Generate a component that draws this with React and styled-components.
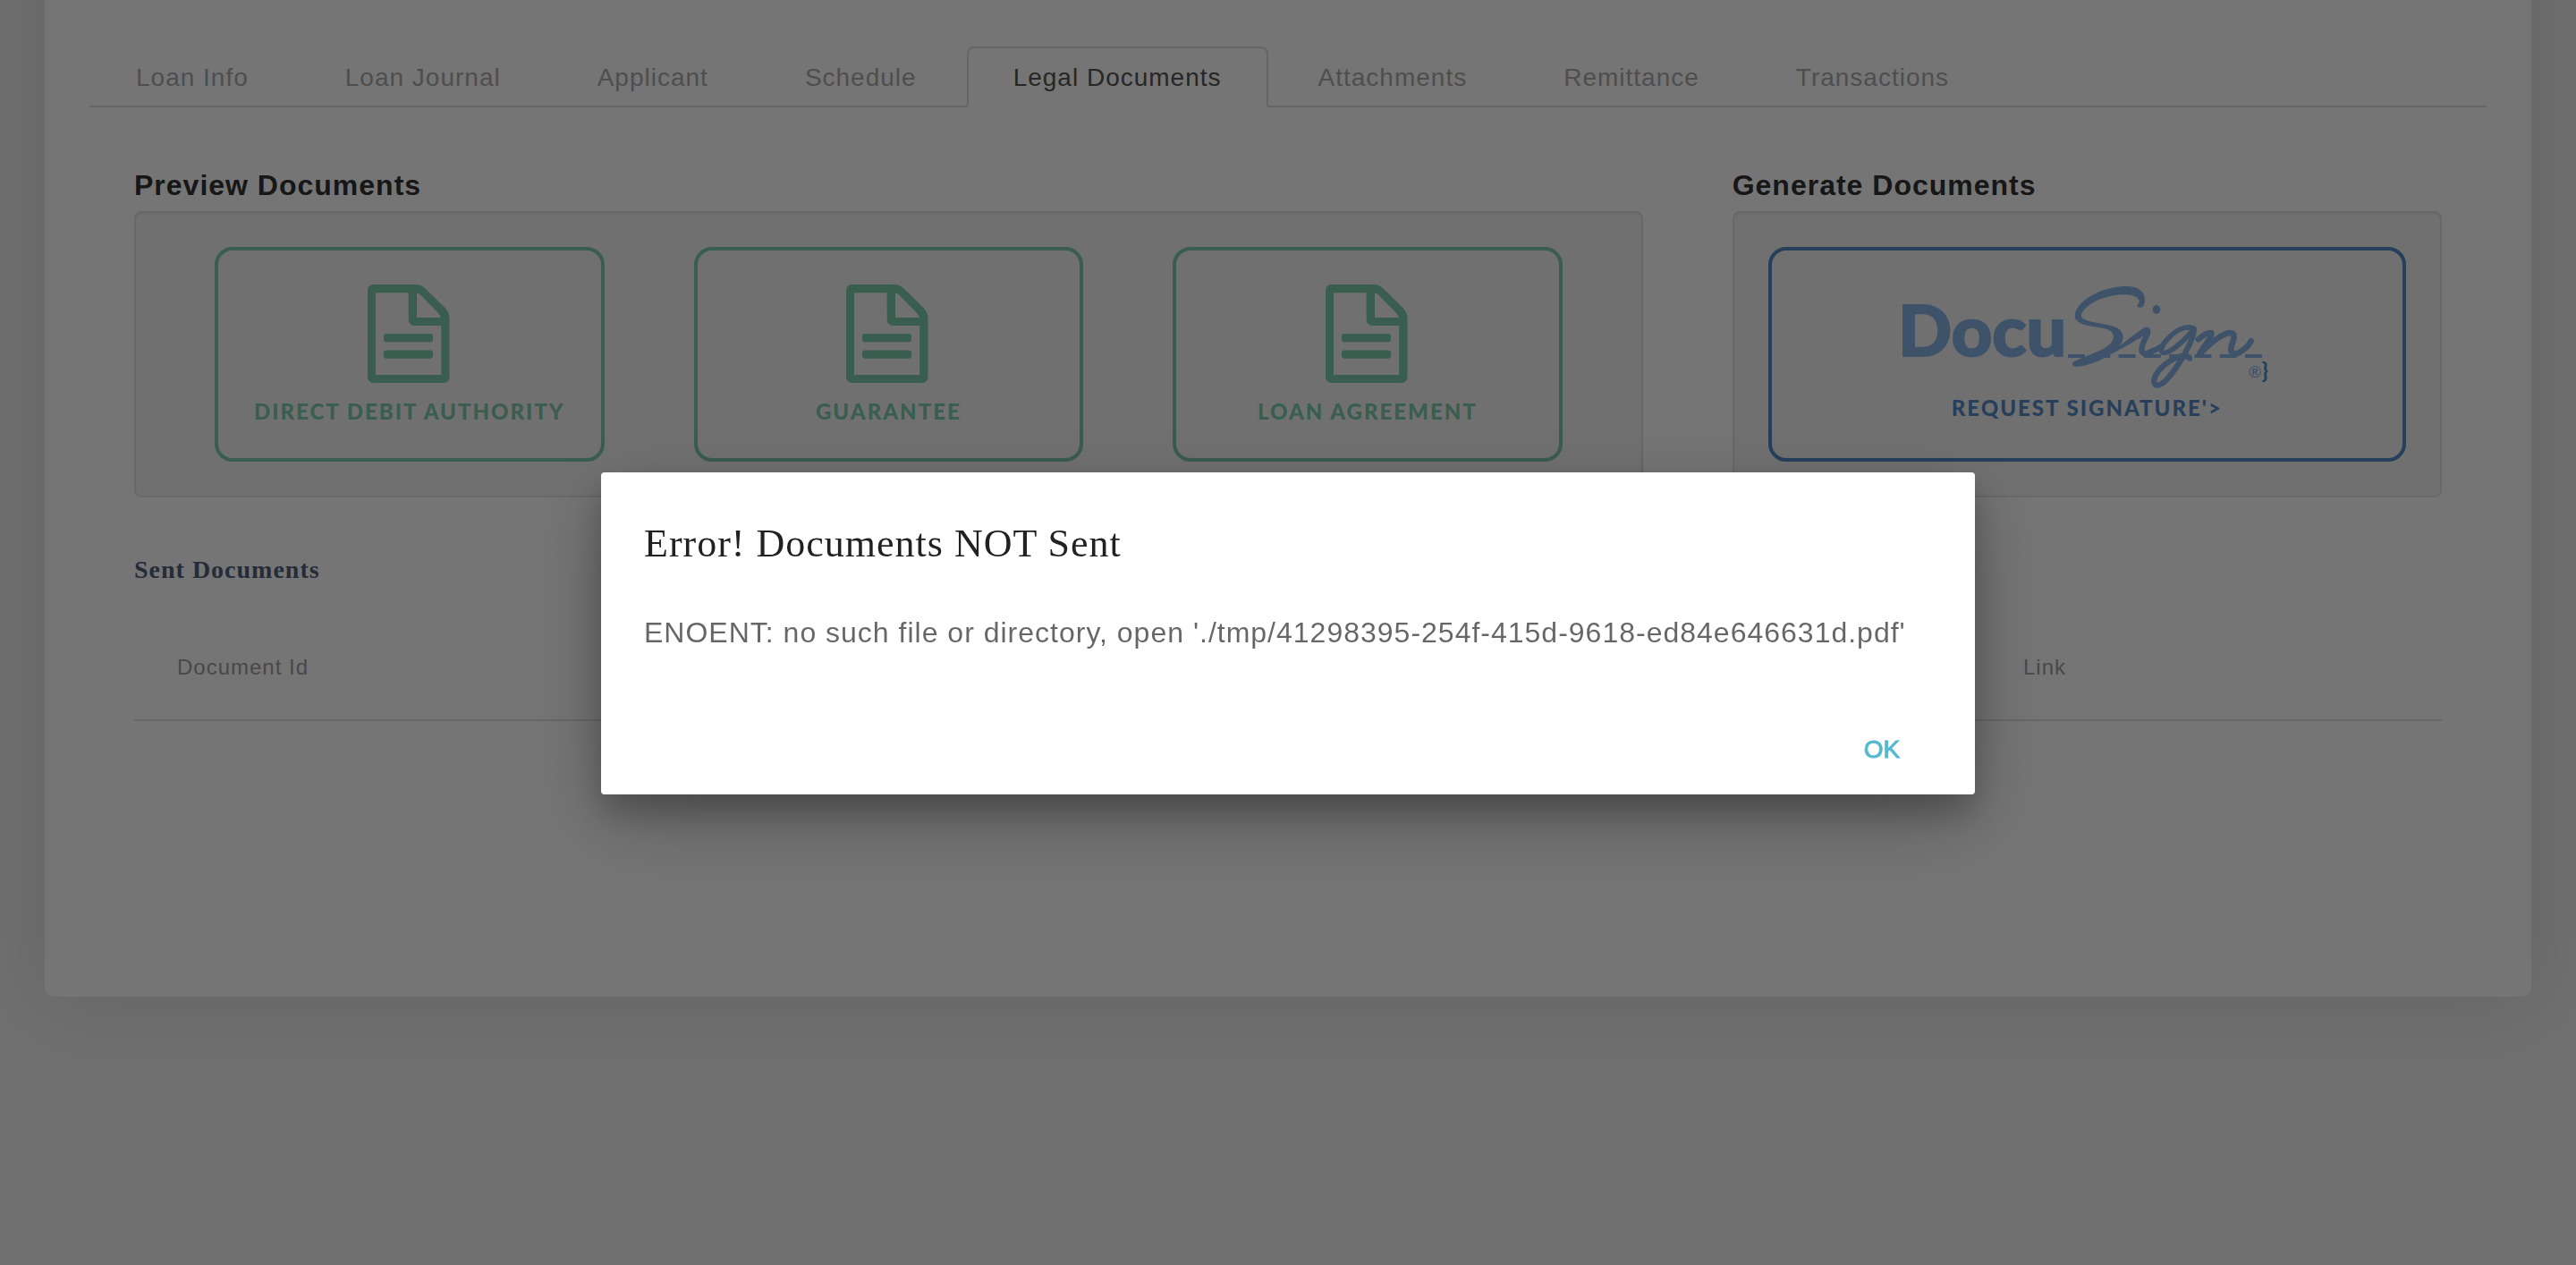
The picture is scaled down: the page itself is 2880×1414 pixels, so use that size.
import React from "react";
import styled, { createGlobalStyle } from "styled-components";

const sans = `"Liberation Sans", Arial, Helvetica, sans-serif`;
const serif = `"Liberation Serif", "Times New Roman", serif`;
const lato = `"Lato Black", Lato, sans-serif`;

const GlobalStyle = createGlobalStyle`
  *, *::before, *::after { box-sizing: border-box; }
  html { height: 100%; }
  body {
    margin: 0;
    min-height: 100%;
    background: #f2f2f2;
    color: #333;
    font-family: ${sans};
    font-size: 28px;
    line-height: 40px;
    letter-spacing: 1px;
  }
  h1, h2, h3, p { margin: 0; }
`;

const Page = styled.div`
  min-height: 100vh;
  padding: 0 50px;
  overflow: hidden;
`;

/* The card's head is scrolled out above the window. */
const Card = styled.main`
  margin-top: -200px;
  padding: 252px 50px 308px;
  background: #fff;
  border-radius: 10px;
  box-shadow: 0 0 100px rgba(0, 0, 0, 0.1);
`;

const Tabs = styled.nav`
  display: flex;
  gap: 4px;
  border-bottom: 2px solid #ddd;
`;

const Tab = styled.a`
  margin-bottom: -2px;
  padding: 13px 50px 11px;
  border: 2px solid ${(p) => (p.$active ? "#ddd" : "transparent")};
  border-bottom-color: ${(p) => (p.$active ? "#fff" : "transparent")};
  border-radius: 8px 8px 0 0;
  background: ${(p) => (p.$active ? "#fff" : "transparent")};
  color: ${(p) => (p.$active ? "#555" : "#aaa")};
  text-decoration: none;
  white-space: nowrap;
`;

const Columns = styled.div`
  display: grid;
  grid-template-columns: 2fr 1fr;
  margin-top: 66px;
`;

const Column = styled.section`
  min-width: 0;
  padding: 0 50px;
`;

const Heading = styled.h2`
  color: #333;
  font-size: 32px;
  line-height: 42px;
  font-weight: 700;
`;

const Well = styled.div`
  display: grid;
  grid-template-columns: repeat(${(p) => p.$cols}, 1fr);
  column-gap: 100px;
  margin-top: 8px;
  padding: 38px ${(p) => (p.$cols > 1 ? 88 : 38)}px;
  background: #f5f5f5;
  border: 2px solid #e3e3e3;
  border-radius: 8px;
  box-shadow: inset 0 2px 2px rgba(0, 0, 0, 0.05);
`;

const DocButton = styled.button`
  display: flex;
  flex-direction: column;
  align-items: center;
  gap: ${(p) => p.$gap}px;
  height: 240px;
  padding: 38px 0 0;
  background: transparent;
  border: 4px solid ${(p) => p.$color};
  border-radius: 20px;
  color: ${(p) => p.$color};
  font-family: ${lato};
  font-size: 24px;
  line-height: 32px;
  font-weight: 900;
  letter-spacing: 2px;
  white-space: nowrap;
`;

const LogoRow = styled.span`
  display: flex;
  align-items: flex-end;
  line-height: 40px;
`;

const Logo = styled.svg`
  display: block;
  margin-left: -8px;
`;

const SentHeading = styled.h3`
  margin: 61px 50px 0;
  color: #525f7a;
  font-family: ${serif};
  font-size: 28px;
  line-height: 40px;
  font-weight: 700;
`;

const TableWrap = styled.div`
  padding: 31px 50px 0;
`;

const Table = styled.table`
  width: 100%;
  table-layout: fixed;
  border-collapse: separate;
  border-spacing: 0;
`;

const Th = styled.th`
  height: 118px;
  padding: 0 48px;
  border-bottom: 2px solid #e0e0e0;
  color: #9e9e9e;
  font-size: 24px;
  font-weight: 400;
  text-align: left;
`;

const Overlay = styled.div`
  position: fixed;
  inset: 0;
  display: flex;
  align-items: center;
  justify-content: center;
  padding: 16px 0 14px;
  background: rgba(0, 0, 0, 0.54);
`;

const Dialog = styled.div`
  width: 75%;
  max-width: 1536px;
  background: #fff;
  border-radius: 4px;
  box-shadow: 0 28px 90px rgba(0, 0, 0, 0.25), 0 20px 36px rgba(0, 0, 0, 0.22);
`;

const DialogTitle = styled.h1`
  padding: 48px 48px 40px;
  color: rgba(0, 0, 0, 0.87);
  font-family: ${serif};
  font-size: 44px;
  line-height: 64px;
  font-weight: 400;
`;

const DialogText = styled.p`
  padding: 0 48px 50px;
  color: rgba(0, 0, 0, 0.6);
  font-size: 32px;
  line-height: 54px;
`;

const DialogActions = styled.div`
  display: flex;
  justify-content: flex-end;
  padding: 16px;
`;

const FlatButton = styled.button`
  min-width: 176px;
  height: 72px;
  padding: 4px 0 0;
  border: none;
  background: transparent;
  color: #53b9d1;
  font-family: ${sans};
  font-size: 28px;
  line-height: 40px;
  font-weight: 500;
  -webkit-text-stroke: 1px currentColor;
`;

function FileIcon() {
  return (
    <svg width="94" height="110" viewBox="0 0 94 110" fill="currentColor" fillRule="evenodd" aria-hidden="true">
      <path d="M7 0H53C59 0 62 2 66 6L86 25.500C90 30 91.500 33 91.500 39V103Q91.500 110 84.500 110H7Q0 110 0 103V7Q0 0 7 0ZM9 9.300V101H82.300V46H53Q45.700 46 45.700 39V9.300ZM55 9.500V37H81.700C81.500 35 80.500 33.500 79 32L59 11.500Q57 9.700 55 9.500Z" />
      <rect x="18" y="55" width="55" height="9.300" rx="3" />
      <rect x="18" y="73.400" width="55" height="9.300" rx="3" />
    </svg>
  );
}

function DocuSignLogo() {
  const blue = "#88b2e8";
  return (
    <Logo width="408" height="116" viewBox="-8 0 408 116" role="img" aria-label="DocuSign" fill="none" stroke={blue}>
      <text x="-7" y="80" fontFamily={lato} fontWeight="900" fontSize="79" letterSpacing="0" fill={blue} strokeWidth="2">Docu</text>
      <g transform="translate(172 -8) scale(0.3333)" strokeLinecap="round" strokeLinejoin="round">
        <path strokeLinecap="butt" strokeWidth="12" strokeDasharray="57 27.86" d="M33 264H684" />
        <path fill={blue} stroke="none" d="M264 95C266 102 280 104 287 95C293 82 292 62 284 52C272 34 250 29 222 30C160 32 95 62 68 98C55 115 52 132 62 144C74 158 100 163 130 167C160 171 178 176 184 190C190 206 180 222 160 235C125 255 80 270 55 281C46 286 45 296 56 299C80 302 125 288 160 268C195 249 240 226 275 202L292 168C262 184 235 210 206 230C214 220 218 212 218 198C217 175 190 163 165 159C130 152 90 147 80 135C74 125 82 110 98 98C130 72 180 58 222 58C245 58 262 64 270 74C276 82 270 86 264 95Z" />
        <path strokeWidth="19" d="M270 196C282 186 290 178 298 176Q303 180 299 190C290 208 280 230 280 246Q284 260 300 254C322 246 335 240 350 230" />
        <ellipse cx="330" cy="108" rx="13" ry="15" fill={blue} stroke="none" />
        <path strokeWidth="17" d="M455 172C425 158 390 182 368 206C350 226 340 244 350 252C366 258 400 232 428 204C442 190 450 182 455 172" />
        <path strokeWidth="19" d="M455 172C458 190 440 230 418 268C395 305 360 360 334 362C316 362 318 336 340 310C362 284 400 262 425 264Q440 266 441 272" />
        <path strokeWidth="19" d="M470 208C488 194 500 184 514 186C520 196 490 230 476 254" />
        <path strokeWidth="20" d="M476 256C505 226 548 188 578 186C596 186 590 208 582 228C574 252 590 262 608 252C628 240 642 226 647 214" />
      </g>
      <text x="385" y="104" fontFamily={sans} fontSize="19" letterSpacing="0" fill={blue} stroke="none">®</text>
    </Logo>
  );
}

const TABS = ["Loan Info", "Loan Journal", "Applicant", "Schedule", "Legal Documents", "Attachments", "Remittance", "Transactions"];
const PREVIEWS = ["DIRECT DEBIT AUTHORITY", "GUARANTEE", "LOAN AGREEMENT"];

export default function App() {
  return (
    <>
      <GlobalStyle />
      <Page>
        <Card>
          <Tabs>
            {TABS.map((t) => (
              <Tab key={t} href="#" $active={t === "Legal Documents"}>{t}</Tab>
            ))}
          </Tabs>
          <Columns>
            <Column>
              <Heading>Preview Documents</Heading>
              <Well $cols={3}>
                {PREVIEWS.map((t) => (
                  <DocButton key={t} type="button" $color="#7ccaaa" $gap={16}>
                    <FileIcon />
                    {t}
                  </DocButton>
                ))}
              </Well>
            </Column>
            <Column>
              <Heading>Generate Documents</Heading>
              <Well $cols={1}>
                <DocButton type="button" $color="#538bc6" $gap={6}>
                  <LogoRow>
                    <DocuSignLogo />
                    {"}"}
                  </LogoRow>
                  {"REQUEST SIGNATURE'>"}
                </DocButton>
              </Well>
            </Column>
          </Columns>
          <SentHeading>Sent Documents</SentHeading>
          <TableWrap>
            <Table>
              <thead>
                <tr>
                  <Th>Document Id</Th>
                  <Th />
                  <Th />
                  <Th />
                  <Th>Link</Th>
                </tr>
              </thead>
            </Table>
          </TableWrap>
        </Card>
      </Page>
      <Overlay>
        <Dialog role="dialog" aria-modal="true" aria-labelledby="dialog-title">
          <DialogTitle id="dialog-title">Error! Documents NOT Sent</DialogTitle>
          <DialogText>ENOENT: no such file or directory, open './tmp/41298395-254f-415d-9618-ed84e646631d.pdf'</DialogText>
          <DialogActions>
            <FlatButton type="button">OK</FlatButton>
          </DialogActions>
        </Dialog>
      </Overlay>
    </>
  );
}
